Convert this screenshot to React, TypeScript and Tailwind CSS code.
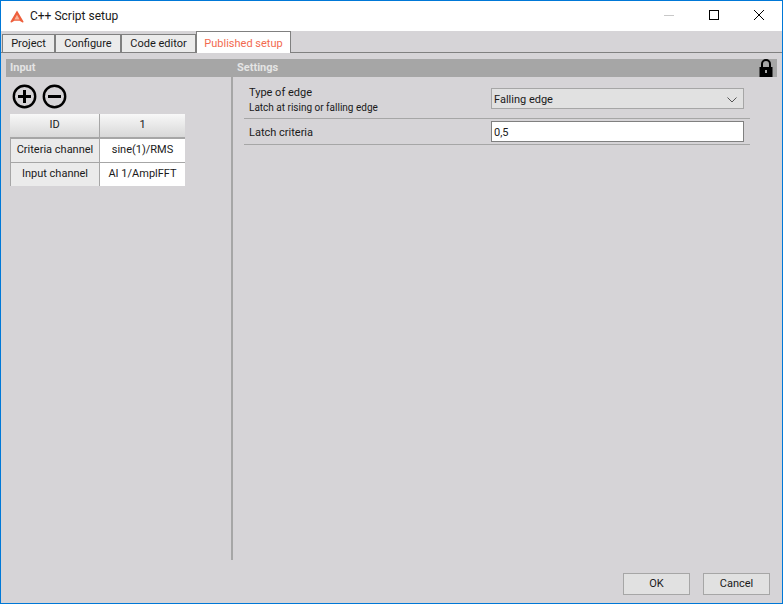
const tabs = [
  { label: 'Project', width: 'w-13.25' },
  { label: 'Configure', width: 'w-16.5' },
  { label: 'Code editor', width: 'w-18.75' },
];

function Logo() {
  return (
    <svg width="14" height="13" viewBox="0 0 14 13">
      <path
        d="M7 0.5 L13.5 11.5 Q13.6 12.6 12.5 12.4 L9.6 10.8 L4.4 10.8 L1.5 12.4 Q0.4 12.6 0.5 11.5 Z"
        fill="#ee5f3c"
      />
      <path d="M7 4.8 L9.6 9.4 L4.4 9.4 Z" fill="#f9b49c" />
    </svg>
  );
}

function RoundIcon({ minus }: { minus?: boolean }) {
  return (
    <svg width="25" height="25" viewBox="0 0 25 25">
      <circle cx="12.5" cy="12.5" r="10.7" fill="none" stroke="#000" strokeWidth="2.4" />
      <rect x="6" y="11" width="13" height="3" fill="#000" />
      {!minus && <rect x="11" y="6" width="3" height="13" fill="#000" />}
    </svg>
  );
}

function Lock() {
  return (
    <svg width="14" height="18" viewBox="0 0 14 18">
      <path d="M3 9 V5 a4 4 0 0 1 8 0 V9" fill="none" stroke="#000" strokeWidth="2" />
      <rect x="0.5" y="8" width="13" height="10" fill="#000" />
      <rect x="6" y="11" width="2" height="3" fill="#a6a6a6" />
    </svg>
  );
}

export default function App() {
  return (
    <div
      className="flex h-screen w-full flex-col overflow-hidden border border-[#0078d7] bg-[#d6d4d7] text-[11px] text-[#1a1a1a]"
      style={{ fontFamily: 'Roboto, "Noto Sans", sans-serif' }}
    >
      {/* title bar */}
      <div className="flex h-7.5 items-center bg-white pl-2.25">
        <Logo />
        <span className="ml-1.5 text-xs">C++ Script setup</span>
        <div className="ml-auto flex items-center gap-8.75 pr-4.5 pb-0.5">
          <div className="h-px w-2.5 bg-[#c8c8c8]" />
          <div className="size-2.5 border border-black" />
          <svg width="10" height="10" viewBox="0 0 10 10">
            <path d="M0 0 L10 10 M10 0 L0 10" stroke="#000" strokeWidth="1" />
          </svg>
        </div>
      </div>

      {/* tabs */}
      <div className="flex h-5.5 items-end border-b border-[#808080] pl-px">
        {tabs.map((t) => (
          <div
            key={t.label}
            className={`flex h-4.5 items-center justify-center border border-b-0 border-[#808080] bg-[#ebebeb] pt-0.5 ${t.width}`}
          >
            {t.label}
          </div>
        ))}
        <div className="-mb-px flex h-5.5 w-23.75 items-center justify-center border border-b-0 border-[#808080] bg-white pt-1 text-[#f26a4f]">
          Published setup
        </div>
      </div>

      {/* section header */}
      <div className="mt-1.5 mr-1.25 ml-1.25 flex h-4.5 items-center bg-[#a6a6a6] font-bold text-[#e4e4e4]">
        <span className="ml-1 w-56.75">Input</span>
        <span>Settings</span>
        <div className="mr-1 ml-auto h-4.5">
          <Lock />
        </div>
      </div>

      {/* body */}
      <div className="flex h-120.75">
        <div className="w-57.5 pt-1.75 pl-2.25">
          <div className="mb-1.25 flex h-6.25 items-center gap-1.25 pl-0.5">
            <RoundIcon />
            <RoundIcon minus />
          </div>
          <div className="grid w-43.75 grid-cols-[90px_85px] text-center">
            <div className="flex h-6.25 items-center justify-center border-r border-b-2 border-[#a6a6a6] bg-linear-to-b from-[#f8f8f8] to-[#d8d8d8]">
              ID
            </div>
            <div className="flex h-6.25 items-center justify-center border-b-2 border-[#a6a6a6] bg-linear-to-b from-[#f8f8f8] to-[#d8d8d8]">
              1
            </div>
            <div className="flex h-6 items-center justify-center border-x border-b border-[#a6a6a6] bg-[#ebebeb]">
              Criteria channel
            </div>
            <div className="flex h-6 items-center justify-center border-b border-[#a6a6a6] bg-white">
              sine(1)/RMS
            </div>
            <div className="flex h-5.75 items-center justify-center border-x border-[#a6a6a6] bg-[#ebebeb]">
              Input channel
            </div>
            <div className="flex h-5.75 items-center justify-center bg-white">AI 1/AmplFFT</div>
          </div>
        </div>

        <div className="w-0.5 bg-[#a6a6a6]" />

        <div className="w-129.25 pt-2.5 pl-2.75">
          <div className="flex h-8 items-start border-b border-[#a6a6a6]">
            <div className="w-61.75 pl-1.25 leading-none">
              <div>Type of edge</div>
              <div className="mt-1.25 text-[10px]">Latch at rising or falling edge</div>
            </div>
            <div className="mt-px flex h-5.25 w-63.25 items-center justify-between border border-[#a6a6a6] bg-[#e1e1e1] pr-1.5 pl-0.5">
              <span className="pt-1">Falling edge</span>
              <svg className="mt-0.5" width="10" height="6" viewBox="0 0 10 6">
                <path d="M0.5 0.5 L5 5 L9.5 0.5" fill="none" stroke="#555" strokeWidth="1" />
              </svg>
            </div>
          </div>
          <div className="flex h-6.5 items-center border-b border-[#a6a6a6]">
            <div className="w-61.75 pt-1 pl-1.25">Latch criteria</div>
            <div className="flex h-5.25 w-63.25 items-center border border-[#808080] bg-white px-0.5">
              <span className="pt-1">0,5</span>
            </div>
          </div>
        </div>
      </div>

      {/* footer */}
      <div className="flex flex-1 items-start justify-end gap-3.25 pt-3.25 pr-3">
        <button className="h-5.5 w-16.75 border border-[#a6a6a6] bg-[#e1e1e1]">OK</button>
        <button className="h-5.5 w-16.75 border border-[#a6a6a6] bg-[#e1e1e1]">Cancel</button>
      </div>
    </div>
  );
}
